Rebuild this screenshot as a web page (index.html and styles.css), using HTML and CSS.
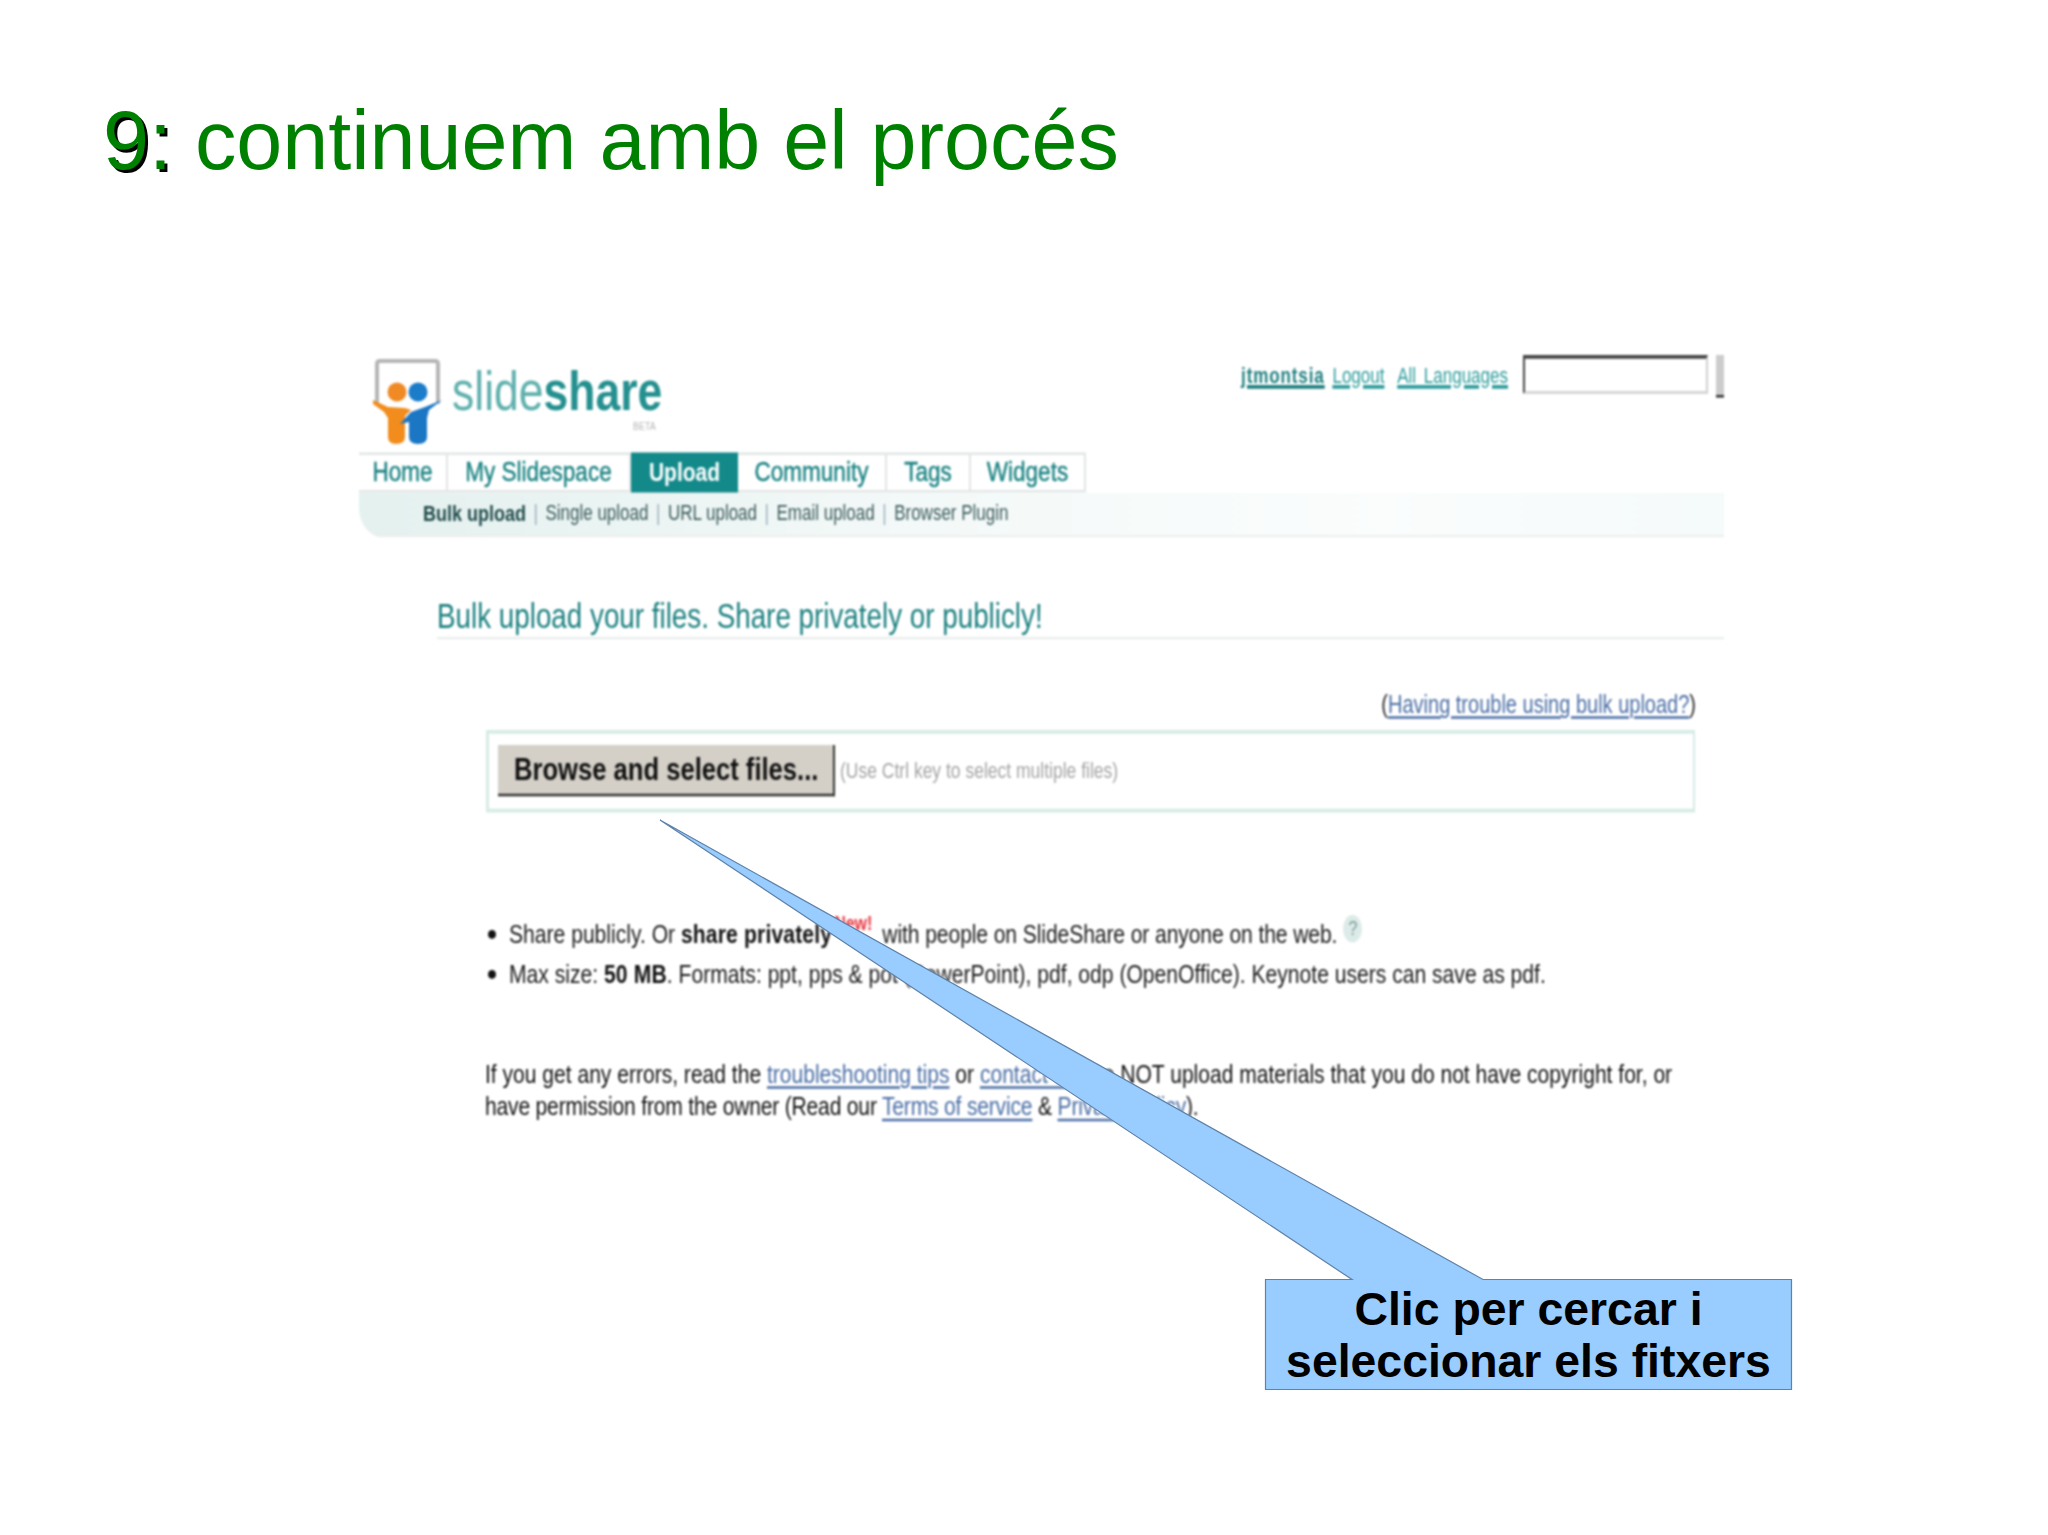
FILE: index.html
```html
<!DOCTYPE html>
<html lang="ca">
<head>
<meta charset="utf-8">
<title>9: continuem amb el procés</title>
<link rel="stylesheet" href="styles.css">
</head>
<body>
<main class="slide">
  <h1 class="title"><span class="shadowed">9:</span> continuem amb el procés</h1>

  <section class="shot">
    <header class="top">
      <svg class="logo-mark" viewBox="359 355 93 97" preserveAspectRatio="none" aria-hidden="true">
        <path d="M377 404 V364 Q377 361 380 361 H435 Q438 361 438 364 V404" fill="#fff" stroke="#b5b5b5" stroke-width="4"/>
        <path d="M373 400 L388 407 L405 408 L411 410 L405 416 L405 437 Q405 444 396 444 Q388 444 388 437 L388 418 L384 412 L373 404 Z" fill="#f28c1c"/>
        <circle cx="397" cy="392" r="9.5" fill="#ef8a25"/>
        <path d="M442 400 L429 410 L427 418 L427 437 Q427 444 418 444 Q409 444 409 437 L409 422 L400 424 L411 412 L425 407 Z" fill="#1b76c4"/>
        <circle cx="418" cy="392" r="9.5" fill="#1b7cc9"/>
      </svg>
      <div class="brand">
        <div class="wordmark">slide<b>share</b></div>
        <div class="beta">BETA</div>
      </div>
      <div class="account">
        <div class="account-links"><a href="#" class="user">jtmontsia</a> <a href="#" class="logout">Logout</a> <a href="#">All Languages</a></div>
        <input class="search" type="text" aria-label="Search">
        <span class="search-btn"></span>
      </div>
    </header>

    <nav class="tabs">
      <a href="#">Home</a>
      <a href="#">My Slidespace</a>
      <a href="#" class="active">Upload</a>
      <a href="#">Community</a>
      <a href="#">Tags</a>
      <a href="#">Widgets</a>
    </nav>
    <nav class="subtabs">
      <b>Bulk upload</b><i>|</i><span>Single upload</span><i>|</i><span>URL upload</span><i>|</i><span>Email upload</span><i>|</i><span>Browser Plugin</span>
    </nav>

    <h2 class="heading">Bulk upload your files. Share privately or publicly!</h2>

    <p class="trouble">(<a href="#">Having trouble using bulk upload?</a>)</p>

    <div class="upload-box">
      <button class="browse" type="button">Browse and select files...</button>
      <span class="hint">(Use Ctrl key to select multiple files)</span>
    </div>

    <ul class="facts">
      <li>Share publicly. Or <b>share privately</b><span class="new">New!</span><span class="snug">with people on SlideShare or anyone on the web.</span><span class="help">?</span></li>
      <li>Max size: <b>50 MB</b>. Formats: ppt, pps &amp; pot (PowerPoint), pdf, odp (OpenOffice). Keynote users can save as pdf.</li>
    </ul>

    <p class="notes">If you get any errors, read the <a href="#">troubleshooting tips</a> or <a href="#">contact us</a>. Do NOT upload materials that you do not have copyright for, or<br><span class="tight">have permission from the owner (Read our <a href="#">Terms of service</a> &amp; <a href="#">Privacy Policy</a>).</span></p>
  </section>

  <svg class="callout-shape" viewBox="0 0 2048 1535" aria-hidden="true">
    <path d="M1265.5 1279.5 H1352 L660 820 L1483 1279.5 H1791.5 V1389.5 H1265.5 Z" fill="#99ccff" stroke="#5f82a8" stroke-width="1.2"/>
  </svg>
  <div class="callout-text">Clic per cercar i<br>seleccionar els fitxers</div>
</main>
</body>
</html>
```

FILE: styles.css
```css
* { box-sizing: border-box; }
html, body { margin: 0; padding: 0; background: #fff; }
body { font-family: "Liberation Sans", Arial, sans-serif; }

.slide { position: relative; width: 2048px; height: 1535px; overflow: hidden; background: #fff; }

.title {
  margin: 0;
  padding: 95px 0 0 103px;
  font-size: 82.7px;
  line-height: 92px;
  font-weight: 400;
  color: #008000;
}
.shadowed { text-shadow: 3px 3px 0 #000; }

/* pasted screenshot, stretched vertically and slightly soft */
.shot {
  width: 1365px;
  height: 630px;
  margin: 168px 0 0 359px;
  transform: scaleY(1.25);
  transform-origin: 0 0;
  filter: blur(0.8px);
  color: #111;
}
.shot a { color: inherit; }

.top { display: flex; align-items: flex-start; height: 77.6px; }
.logo-mark { width: 93px; height: 77.6px; flex: none; }
.brand { width: 210px; padding-top: 3.6px; }
.wordmark { font-size: 44.5px; line-height: 50px; color: #5fb0ad; white-space: nowrap; }
.wordmark b { color: #24908f; }
.beta { margin: -2px 0 0 181px; font-size: 9px; line-height: 10px; color: #b5b5b5; }
.account { margin-left: auto; display: flex; align-items: flex-start; }
.account-links { padding-top: 7px; font-size: 17px; line-height: 20px; color: #2f9c9c; white-space: nowrap; word-spacing: 3px; }
.account-links a { text-decoration-thickness: 3px; }
.account-links .user { font-weight: 700; letter-spacing: 0.9px; color: #1f7f7f; }
.account-links .logout { margin-right: 6px; }
.search {
  width: 185px;
  height: 31px;
  margin: 0 8px 0 15px;
  padding: 0;
  background: #fff;
  border-style: solid;
  border-width: 3px 2px 2px 2px;
  border-color: #444 #d0d0d0 #d0d0d0 #444;
}
.search-btn { width: 8px; height: 34px; background: #ccc; border-bottom: 2px solid #333; }

.tabs {
  display: grid;
  grid-template-columns: 89px 183px 107px 149px 84px 115px;
  width: 727px;
  height: 32px;
  border-top: 2px solid #e2e6e6;
  border-bottom: 2px solid #e2e6e6;
  font-size: 22.5px;
  line-height: 28px;
  color: #1f8585;
}
.tabs a {
  text-align: center;
  text-decoration: none;
  border-right: 2px solid #e2e6e6;
  -webkit-text-stroke: 0.4px #1f8585;
}
.tabs .active { margin: -2px 0; line-height: 32px; background: #13898a; color: #fff; font-weight: 700; -webkit-text-stroke: 0; border-right: 0; font-size: 21px; }

.subtabs {
  display: flex;
  gap: 7.5px;
  align-items: center;
  height: 36px;
  padding: 1px 0 0 64px;
  border-bottom-left-radius: 24px;
  background: linear-gradient(90deg, #e4f1ef 0%, #f3f9f8 40%, #fbfdfd 75%, #f5fafa 100%);
  border-bottom: 2px solid #eceeee;
  font-size: 17px;
  color: #3a5a5a;
}
.subtabs b { font-size: 18px; color: #1f4a4a; }
.subtabs i { font-style: normal; color: #9ab; font-size: 17px; }

.heading {
  margin: 45.4px 0 0 78px;
  height: 36px;
  padding-top: 1px;
  border-bottom: 1.5px solid #dcdfdf;
  font-size: 27.8px;
  line-height: 34px;
  font-weight: 400;
  color: #1a7f7f;
}

.trouble {
  margin: 40.5px 28px 0 0;
  font-size: 20px;
  line-height: 24px;
  text-align: right;
  color: #222;
}
.trouble a, .notes a { color: #4a6ea5; text-decoration-thickness: 2px; text-underline-offset: 3px; }

.upload-box {
  display: flex;
  align-items: center;
  width: 1209px;
  height: 65.6px;
  margin: 8.5px 0 0 127px;
  padding-left: 9px;
  border: 3px solid #d7ebe6;
  border-right-width: 2px;
}
.browse {
  width: 337px;
  height: 41px;
  padding: 0 0 0 16px;
  border: 0;
  border-right: 2px solid #333;
  border-bottom: 2px solid #333;
  background: #d4d0c8;
  font-family: inherit;
  font-size: 25.6px;
  font-weight: 700;
  color: #111;
  text-align: left;
  white-space: nowrap;
}
.hint { margin-left: 5px; font-size: 17.5px; color: #a4a4a4; white-space: nowrap; }

.facts {
  margin: 81px 0 0 134px;
  padding: 0 0 0 16px;
  font-size: 21.1px;
  line-height: 32px;
  color: #1a1a1a;
  white-space: nowrap;
  list-style: none;
}
.facts li::before {
  content: "";
  display: inline-block;
  width: 8px;
  height: 7px;
  margin: 0 13px 2px -21px;
  border-radius: 50%;
  background: #111;
  vertical-align: middle;
}
.facts b { color: #111; letter-spacing: 0.15px; }
.snug { letter-spacing: -0.1px; }
.new { position: relative; top: -10px; margin: 0 10px 0 2px; font-size: 16px; line-height: 16px; font-weight: 700; color: #e8333f; }
.help {
  position: relative;
  top: -6px;
  display: inline-block;
  width: 19px;
  height: 22px;
  margin-left: 6px;
  border-radius: 50%;
  background: #dcebe8;
  font-size: 16px;
  line-height: 22px;
  text-align: center;
  color: #7b9b99;
}

.notes {
  margin: 51.5px 0 0 126px;
  font-size: 21.05px;
  line-height: 26.4px;
  color: #111;
  white-space: nowrap;
}
.tight { letter-spacing: -0.18px; }

.callout-shape { position: absolute; left: 0; top: 0; width: 2048px; height: 1535px; }
.callout-text {
  position: absolute;
  left: 1265px;
  top: 1283px;
  width: 527px;
  font-size: 46.4px;
  line-height: 52px;
  font-weight: 700;
  text-align: center;
  color: #000;
}
```
